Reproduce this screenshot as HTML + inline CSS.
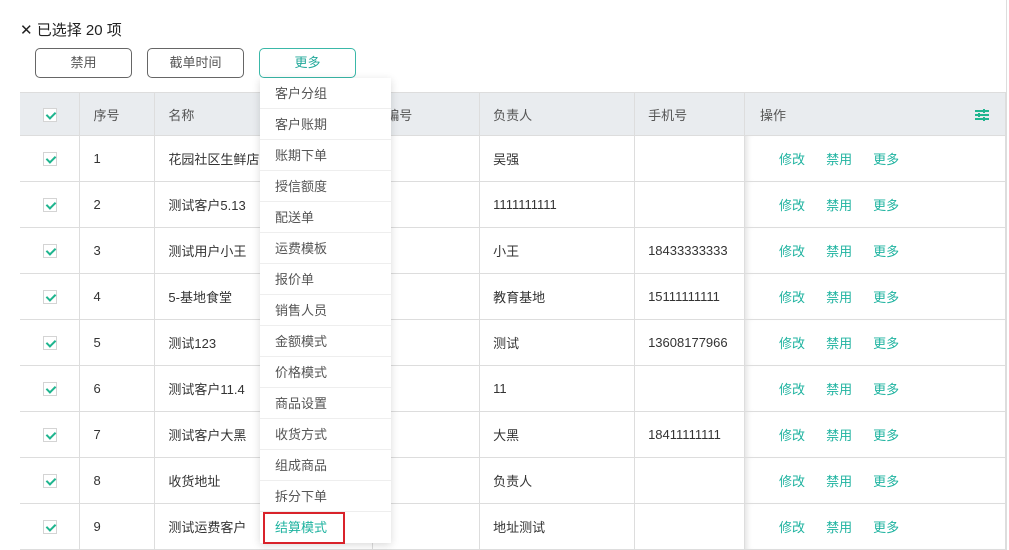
<!DOCTYPE html><html><head><meta charset="utf-8"><style>
*{margin:0;padding:0;box-sizing:border-box}
body{width:1009px;height:550px;overflow:hidden;background:#fff;font-family:"Liberation Sans","Noto Sans CJK SC",sans-serif;font-size:13px;color:#333;position:relative}
.abs{position:absolute}
.btn{position:absolute;top:48px;height:30px;border:1px solid #666;border-radius:5px;text-align:center;line-height:28px;font-size:13px;color:#555;background:#fff}
table{position:absolute;left:20px;top:92px;border-collapse:collapse;width:986px}
td{height:46px;border-bottom:1px solid #ddd;border-right:1px solid #ddd;padding-left:13px;white-space:nowrap;overflow:hidden}
tr.h td{background:#e9ecef;height:43px;color:#555;border-top:1px solid #ddd}
td.c{padding:0;text-align:center}
.cb{display:inline-block;width:14px;height:14px;border:1px solid #d4d4d4;background:#fff;position:relative;vertical-align:middle}
.cb:after{content:"";position:absolute;left:4px;top:1px;width:4px;height:7px;border:solid #1fb58f;border-width:0 2px 2px 0;transform:rotate(45deg)}
td.op{padding-left:34px;color:#1fb3a0;box-shadow:6px 0 6px -4px rgba(0,0,0,.12) inset}
td.op span{margin-right:21px}
.dd{position:absolute;left:260px;top:78px;width:131px;background:#fff;box-shadow:0 2px 8px rgba(0,0,0,.15)}
.dd div{height:31px;line-height:31px;padding-left:15px;border-bottom:1px solid #eee;color:#555}
</style></head><body>
<div class="abs" style="left:20px;top:19px;font-size:15px;color:#222">✕ 已选择 20 项</div>
<div class="btn" style="left:35px;width:97px">禁用</div>
<div class="btn" style="left:147px;width:97px">截单时间</div>
<div class="btn" style="left:259px;width:97px;border-color:#3ab8a8;color:#22a89a">更多</div>
<div class="abs" style="left:1006px;top:0;width:1px;height:550px;background:#ddd"></div>
<table>
<colgroup><col style="width:60px"><col style="width:75px"><col style="width:218px"><col style="width:107px"><col style="width:155px"><col style="width:110px"><col style="width:261px"></colgroup>
<tr class="h"><td class="c"><span class="cb"></span></td><td>序号</td><td>名称</td><td>编号</td><td>负责人</td><td>手机号</td><td style="padding-left:15px;position:relative">操作<svg style="position:absolute;right:16px;top:16px" width="14" height="12" viewBox="0 0 14 12"><g stroke="#1fb58f" stroke-width="2"><line x1="0" y1="2" x2="14" y2="2"/><line x1="0" y1="6" x2="14" y2="6"/><line x1="0" y1="10" x2="14" y2="10"/><line x1="9" y1="0" x2="9" y2="4"/><line x1="4" y1="4" x2="4" y2="8"/><line x1="9" y1="8" x2="9" y2="12"/></g></svg></td></tr>
<tr><td class="c"><span class="cb"></span></td><td>1</td><td>花园社区生鲜店</td><td></td><td>吴强</td><td></td><td class="op"><span>修改</span><span>禁用</span><span>更多</span></td></tr>
<tr><td class="c"><span class="cb"></span></td><td>2</td><td>测试客户5.13</td><td></td><td>1111111111</td><td></td><td class="op"><span>修改</span><span>禁用</span><span>更多</span></td></tr>
<tr><td class="c"><span class="cb"></span></td><td>3</td><td>测试用户小王</td><td></td><td>小王</td><td>18433333333</td><td class="op"><span>修改</span><span>禁用</span><span>更多</span></td></tr>
<tr><td class="c"><span class="cb"></span></td><td>4</td><td>5-基地食堂</td><td></td><td>教育基地</td><td>15111111111</td><td class="op"><span>修改</span><span>禁用</span><span>更多</span></td></tr>
<tr><td class="c"><span class="cb"></span></td><td>5</td><td>测试123</td><td></td><td>测试</td><td>13608177966</td><td class="op"><span>修改</span><span>禁用</span><span>更多</span></td></tr>
<tr><td class="c"><span class="cb"></span></td><td>6</td><td>测试客户11.4</td><td></td><td>11</td><td></td><td class="op"><span>修改</span><span>禁用</span><span>更多</span></td></tr>
<tr><td class="c"><span class="cb"></span></td><td>7</td><td>测试客户大黑</td><td></td><td>大黑</td><td>18411111111</td><td class="op"><span>修改</span><span>禁用</span><span>更多</span></td></tr>
<tr><td class="c"><span class="cb"></span></td><td>8</td><td>收货地址</td><td></td><td>负责人</td><td></td><td class="op"><span>修改</span><span>禁用</span><span>更多</span></td></tr>
<tr><td class="c"><span class="cb"></span></td><td>9</td><td>测试运费客户</td><td></td><td>地址测试</td><td></td><td class="op"><span>修改</span><span>禁用</span><span>更多</span></td></tr>
</table>
<div class="dd">
<div>客户分组</div><div>客户账期</div><div>账期下单</div><div>授信额度</div><div>配送单</div><div>运费模板</div><div>报价单</div><div>销售人员</div><div>金额模式</div><div>价格模式</div><div>商品设置</div><div>收货方式</div><div>组成商品</div><div>拆分下单</div><div style="color:#1fb3a0;border:none">结算模式</div>
</div>
<div class="abs" style="left:263px;top:512px;width:82px;height:32px;border:2px solid #d9232b"></div>
</body></html>
